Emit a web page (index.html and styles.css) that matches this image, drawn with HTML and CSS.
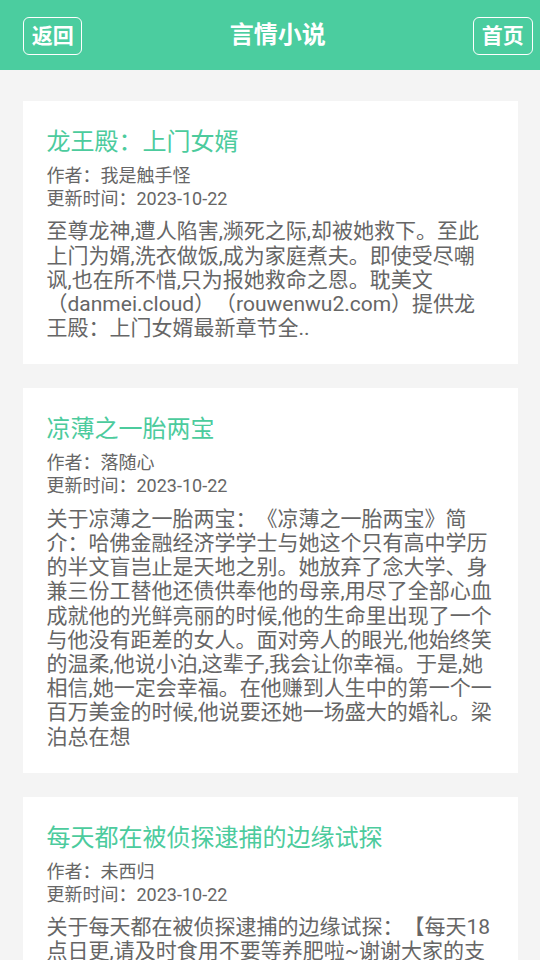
FILE: index.html
```html
<!DOCTYPE html>
<html lang="zh-CN">
<head>
<meta charset="utf-8">
<meta name="viewport" content="width=540">
<title>言情小说</title>
<link rel="stylesheet" href="styles.css">
</head>
<body>
<header class="topbar">
  <a class="nav-btn" href="#">返回</a>
  <h1 class="page-title">言情小说</h1>
  <a class="nav-btn" href="#">首页</a>
</header>
<main class="list">
  <article class="card">
    <h2 class="book-title">龙王殿：上门女婿</h2>
    <p class="meta">作者：我是触手怪</p>
    <p class="meta">更新时间：2023-10-22</p>
    <p class="desc">至尊龙神,遭人陷害,濒死之际,却被她救下。至此上门为婿,洗衣做饭,成为家庭煮夫。即使受尽嘲讽,也在所不惜,只为报她救命之恩。耽美文（danmei.cloud）（rouwenwu2.com）提供龙王殿：上门女婿最新章节全..</p>
  </article>
  <article class="card">
    <h2 class="book-title">凉薄之一胎两宝</h2>
    <p class="meta">作者：落随心</p>
    <p class="meta">更新时间：2023-10-22</p>
    <p class="desc">关于凉薄之一胎两宝：《凉薄之一胎两宝》简介：哈佛金融经济学学士与她这个只有高中学历的半文盲岂止是天地之别。她放弃了念大学、身兼三份工替他还债供奉他的母亲,用尽了全部心血成就他的光鲜亮丽的时候,他的生命里出现了一个与他没有距差的女人。面对旁人的眼光,他始终笑的温柔,他说小泊,这辈子,我会让你幸福。于是,她相信,她一定会幸福。在他赚到人生中的第一个一百万美金的时候,他说要还她一场盛大的婚礼。梁泊总在想</p>
  </article>
  <article class="card">
    <h2 class="book-title">每天都在被侦探逮捕的边缘试探</h2>
    <p class="meta">作者：未西归</p>
    <p class="meta">更新时间：2023-10-22</p>
    <p class="desc">关于每天都在被侦探逮捕的边缘试探：【每天18点日更,请及时食用不要等养肥啦~谢谢大家的支持】作为一个怪盗,每天都在被侦探逮捕的边缘疯狂试探,这是一种怎样的体验？</p>
  </article>
</main>
</body>
</html>
```
FILE: styles.css
```css
html, body {
  margin: 0;
  padding: 0;
}
body {
  background: #f4f4f4;
  font-family: Roboto, "Noto Sans CJK SC", sans-serif;
  color: #666;
  text-spacing-trim: space-all;
}
.topbar {
  height: 70px;
  background: #4bcd9f;
  display: flex;
  align-items: center;
  justify-content: space-between;
  padding: 0 7.5px 0 23px;
  box-sizing: border-box;
}
.nav-btn {
  display: block;
  box-sizing: border-box;
  height: 38px;
  line-height: 36px;
  padding: 0 7.7px;
  border: 1px solid #fff;
  border-radius: 6px;
  color: #fff;
  font-size: 21px;
  font-weight: bold;
  text-decoration: none;
  margin-top: 1px;
}
.page-title {
  margin: 0;
  color: #fff;
  font-size: 24px;
  font-weight: bold;
  line-height: 30px;
}
.list {
  display: flex;
  flex-direction: column;
  gap: 24px;
  padding: 31px 22.5px 24px;
}
.card {
  background: #fff;
  padding: 24px 24px 24px;
}
.book-title {
  margin: 0;
  font-size: 24px;
  font-weight: normal;
  line-height: 35px;
  color: #4ccb9d;
}
.meta {
  margin: 0;
  font-size: 18px;
  line-height: 23.2px;
  color: #666;
}
.book-title + .meta {
  margin-top: 3.7px;
}
.desc {
  margin: 9.3px 0 0;
  font-size: 21px;
  line-height: 24.2px;
  color: #666;
}
```
